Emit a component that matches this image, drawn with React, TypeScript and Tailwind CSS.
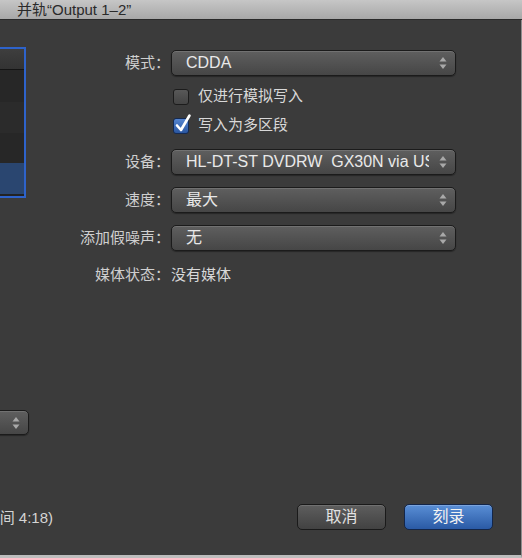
import React from "react";

const font = "font-['Liberation_Sans','Noto_Sans_CJK_SC',sans-serif]";

function Arrows() {
  return (
    <svg width="8" height="14" viewBox="0 0 8 14" className="shrink-0">
      <path d="M4 1 L7.5 5.5 L0.5 5.5 Z" fill="#a9a9a9" />
      <path d="M4 13 L7.5 8.5 L0.5 8.5 Z" fill="#a9a9a9" />
    </svg>
  );
}

function Popup({ value, width = "w-[285px]" }: { value: string; width?: string }) {
  return (
    <div
      className={`${width} h-[26px] shrink-0 flex items-center pl-[14px] pr-[8px] rounded-[5px] border border-[#1b1b1b] bg-gradient-to-b from-[#5f5f5f] to-[#464646] shadow-[inset_0_1px_0_rgba(255,255,255,0.12),0_1px_1px_rgba(0,0,0,0.35)]`}
    >
      <span className="flex-1 mr-[10px] overflow-hidden whitespace-pre text-[16px] text-[#e9e9e9] leading-none">
        {value}
      </span>
      <Arrows />
    </div>
  );
}

function Checkbox({ checked, label }: { checked?: boolean; label: string }) {
  return (
    <div className="flex items-center h-[29px] pl-[2px]">
      <div
        className={`relative w-[16px] h-[16px] rounded-[3px] border ${
          checked
            ? "border-[#142a52] bg-gradient-to-b from-[#5585d0] to-[#2a56a0]"
            : "border-[#1c1c1c] bg-gradient-to-b from-[#585858] to-[#444444]"
        }`}
      >
        {checked && (
          <svg width="18" height="20" viewBox="0 0 18 20" className="absolute left-[0px] top-[-6px]">
            <path
              d="M3 12.5 L7 17 L15.5 2.5"
              fill="none"
              stroke="#ffffff"
              strokeWidth="2.6"
              strokeLinecap="round"
              strokeLinejoin="round"
            />
          </svg>
        )}
      </div>
      <span className="ml-[9px] text-[15px] text-[#d8d8d8]">{label}</span>
    </div>
  );
}

function Row({ label, children, className = "" }: { label: string; children: React.ReactNode; className?: string }) {
  return (
    <div className={`flex items-center ${className}`}>
      <div className="w-[110px] shrink-0 text-right text-[15px] text-[#cfcfcf] whitespace-nowrap">{label}</div>
      <div className="ml-[1px]">{children}</div>
    </div>
  );
}

export default function App() {
  return (
    <div className={`w-[522px] h-[558px] flex flex-col bg-[#3b3b3b] overflow-hidden ${font}`}>
      {/* Title bar */}
      <div className="h-[20px] shrink-0 flex items-center pl-[17px] bg-gradient-to-b from-[#c6c6c6] to-[#a8a8a8] border-b border-[#2a2a2a]">
        <span className="text-[15px] text-[#2a2a2a] leading-none">并轨“Output 1–2”</span>
      </div>

      <div className="flex-1 flex border-r border-b-[3px] border-r-[#8e8e8e] border-b-[#bdbdbd] min-h-0">
        {/* Left column, cut off */}
        <div className="w-[60px] shrink-0 flex flex-col items-end overflow-hidden">
          <div className="mt-[27px] mr-[34px] w-[200px] h-[151px] shrink-0 flex flex-col border-2 border-[#2e63cb] bg-[#232323]">
            <div className="h-[21px] shrink-0 bg-gradient-to-b from-[#3e3e3e] to-[#333333] border-b border-[#141414]" />
            <div className="h-[32px] shrink-0 bg-[#272727]" />
            <div className="h-[31px] shrink-0 bg-[#2b2b2b]" />
            <div className="h-[30px] shrink-0 bg-[#272727]" />
            <div className="h-[31px] shrink-0 bg-[#2a4670]" />
          </div>
          <div className="mt-[212px] mr-[31px] w-[120px] h-[25px] shrink-0 flex items-center justify-end pr-[8px] rounded-[5px] border border-[#1b1b1b] bg-gradient-to-b from-[#5f5f5f] to-[#464646] shadow-[inset_0_1px_0_rgba(255,255,255,0.12),0_1px_1px_rgba(0,0,0,0.35)]">
            <Arrows />
          </div>
          <div className="mt-[73px] mr-[7px] h-[20px] shrink-0 whitespace-nowrap text-[15px] leading-[20px] text-[#d4d4d4]">
            时间 4:18)
          </div>
        </div>

        {/* Right column */}
        <div className="flex-1 flex flex-col pr-[28px] pb-[25px]">
          <div className="flex flex-col pt-[30px]">
            <Row label="模式：">
              <Popup value="CDDA" />
            </Row>
            <div className="mt-[6px] ml-[111px]">
              <Checkbox label="仅进行模拟写入" />
              <Checkbox checked label="写入为多区段" />
            </div>
            <Row label="设备：" className="mt-[9px]">
              <Popup value="HL-DT-ST DVDRW  GX30N via USB" />
            </Row>
            <Row label="速度：" className="mt-[12px]">
              <Popup value="最大" />
            </Row>
            <Row label="添加假噪声：" className="mt-[12px]">
              <Popup value="无" />
            </Row>
            <Row label="媒体状态：" className="mt-[12px] h-[24px]">
              <span className="text-[15px] text-[#d8d8d8] whitespace-pre">没有媒体</span>
            </Row>
          </div>

          <div className="mt-auto flex justify-end gap-[18px]">
            <button className="w-[89px] h-[26px] rounded-[5px] border border-[#1a1a1a] bg-gradient-to-b from-[#5e5e5e] to-[#424242] shadow-[inset_0_1px_0_rgba(255,255,255,0.12)] text-[16px] text-[#e2e2e2] leading-none">
              取消
            </button>
            <button className="w-[89px] h-[26px] rounded-[5px] border border-[#13264a] bg-gradient-to-b from-[#5a8fd6] to-[#2a5aa5] shadow-[inset_0_1px_0_rgba(255,255,255,0.2)] text-[16px] text-[#f2f2f2] leading-none">
              刻录
            </button>
          </div>
        </div>
      </div>
    </div>
  );
}
